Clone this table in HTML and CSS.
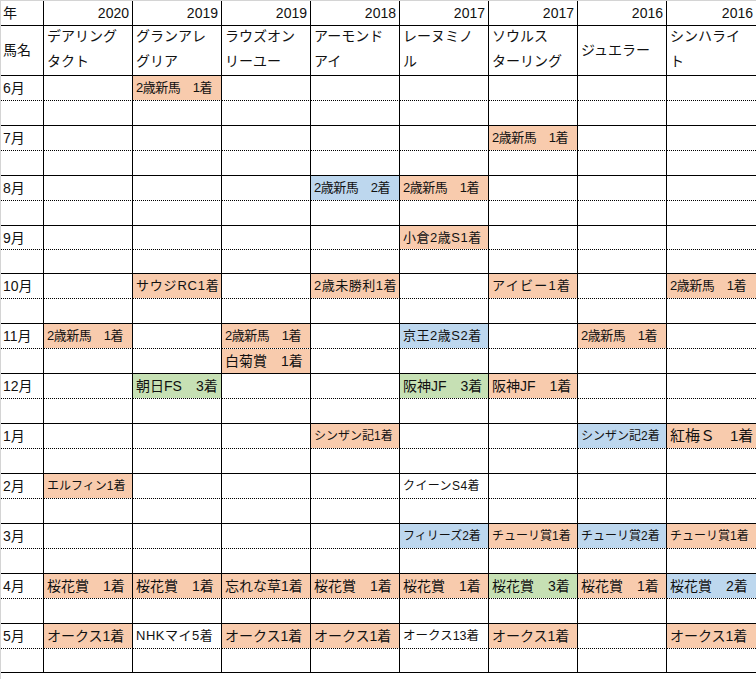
FILE: index.html
```html
<!DOCTYPE html>
<html lang="ja">
<head>
<meta charset="utf-8">
<title>桜花賞・オークス 戦績表</title>
<link rel="stylesheet" href="styles.css">
</head>
<body>
<div class="page">
  <div class="sheet">
    <div class="row">
      <div class="c">年</div><div class="c yr">2020</div><div class="c yr">2019</div><div class="c yr">2019</div><div class="c yr">2018</div><div class="c yr">2017</div><div class="c yr">2017</div><div class="c yr">2016</div><div class="c yr">2016</div>
    </div>
    <div class="row">
      <div class="c hd"><span>馬名</span></div>
      <div class="c hd two"><span>デアリング<br>タクト</span></div>
      <div class="c hd two"><span>グランアレ<br>グリア</span></div>
      <div class="c hd two"><span>ラウズオン<br>リーユー</span></div>
      <div class="c hd two"><span>アーモンド<br>アイ</span></div>
      <div class="c hd two"><span>レーヌミノ<br>ル</span></div>
      <div class="c hd two"><span>ソウルス<br>ターリング</span></div>
      <div class="c hd"><span>ジュエラー</span></div>
      <div class="c hd two"><span>シンハライ<br>ト</span></div>
    </div>

    <div class="row top">
      <div class="c">6月</div><div class="c"></div><div class="c or tight">2歳新馬　1着</div><div class="c"></div><div class="c"></div><div class="c"></div><div class="c"></div><div class="c"></div><div class="c"></div>
    </div>
    <div class="row"><div class="c"></div><div class="c"></div><div class="c"></div><div class="c"></div><div class="c"></div><div class="c"></div><div class="c"></div><div class="c"></div><div class="c"></div></div>

    <div class="row top">
      <div class="c">7月</div><div class="c"></div><div class="c"></div><div class="c"></div><div class="c"></div><div class="c"></div><div class="c or tight">2歳新馬　1着</div><div class="c"></div><div class="c"></div>
    </div>
    <div class="row"><div class="c"></div><div class="c"></div><div class="c"></div><div class="c"></div><div class="c"></div><div class="c"></div><div class="c"></div><div class="c"></div><div class="c"></div></div>

    <div class="row top">
      <div class="c">8月</div><div class="c"></div><div class="c"></div><div class="c"></div><div class="c bl tight">2歳新馬　2着</div><div class="c or tight">2歳新馬　1着</div><div class="c"></div><div class="c"></div><div class="c"></div>
    </div>
    <div class="row"><div class="c"></div><div class="c"></div><div class="c"></div><div class="c"></div><div class="c"></div><div class="c"></div><div class="c"></div><div class="c"></div><div class="c"></div></div>

    <div class="row top">
      <div class="c">9月</div><div class="c"></div><div class="c"></div><div class="c"></div><div class="c"></div><div class="c or sp1">小倉2歳S1着</div><div class="c"></div><div class="c"></div><div class="c"></div>
    </div>
    <div class="row"><div class="c"></div><div class="c"></div><div class="c"></div><div class="c"></div><div class="c"></div><div class="c"></div><div class="c"></div><div class="c"></div><div class="c"></div></div>

    <div class="row top">
      <div class="c">10月</div><div class="c"></div><div class="c or sp2">サウジRC1着</div><div class="c"></div><div class="c or sp1">2歳未勝利1着</div><div class="c"></div><div class="c or sp3">アイビー1着</div><div class="c"></div><div class="c or tight">2歳新馬　1着</div>
    </div>
    <div class="row"><div class="c"></div><div class="c"></div><div class="c"></div><div class="c"></div><div class="c"></div><div class="c"></div><div class="c"></div><div class="c"></div><div class="c"></div></div>

    <div class="row top">
      <div class="c">11月</div><div class="c or tight">2歳新馬　1着</div><div class="c"></div><div class="c or tight">2歳新馬　1着</div><div class="c"></div><div class="c bl sp1">京王2歳S2着</div><div class="c"></div><div class="c or tight">2歳新馬　1着</div><div class="c"></div>
    </div>
    <div class="row">
      <div class="c"></div><div class="c"></div><div class="c"></div><div class="c or k14">白菊賞　1着</div><div class="c"></div><div class="c"></div><div class="c"></div><div class="c"></div><div class="c"></div>
    </div>

    <div class="row top">
      <div class="c">12月</div><div class="c"></div><div class="c gr k14">朝日FS　3着</div><div class="c"></div><div class="c"></div><div class="c gr k14">阪神JF　3着</div><div class="c or k14">阪神JF　1着</div><div class="c"></div><div class="c"></div>
    </div>
    <div class="row"><div class="c"></div><div class="c"></div><div class="c"></div><div class="c"></div><div class="c"></div><div class="c"></div><div class="c"></div><div class="c"></div><div class="c"></div></div>

    <div class="row top">
      <div class="c">1月</div><div class="c"></div><div class="c"></div><div class="c"></div><div class="c or k12">シンザン記1着</div><div class="c"></div><div class="c"></div><div class="c bl k12">シンザン記2着</div><div class="c or k15">紅梅Ｓ　1着</div>
    </div>
    <div class="row"><div class="c"></div><div class="c"></div><div class="c"></div><div class="c"></div><div class="c"></div><div class="c"></div><div class="c"></div><div class="c"></div><div class="c"></div></div>

    <div class="row top">
      <div class="c">2月</div><div class="c or k12">エルフィン1着</div><div class="c"></div><div class="c"></div><div class="c"></div><div class="c k12 wide">クイーンS4着</div><div class="c"></div><div class="c"></div><div class="c"></div>
    </div>
    <div class="row"><div class="c"></div><div class="c"></div><div class="c"></div><div class="c"></div><div class="c"></div><div class="c"></div><div class="c"></div><div class="c"></div><div class="c"></div></div>

    <div class="row top">
      <div class="c">3月</div><div class="c"></div><div class="c"></div><div class="c"></div><div class="c"></div><div class="c bl k12">フィリーズ2着</div><div class="c or k12">チューリ賞1着</div><div class="c bl k12">チューリ賞2着</div><div class="c or k12">チューリ賞1着</div>
    </div>
    <div class="row"><div class="c"></div><div class="c"></div><div class="c"></div><div class="c"></div><div class="c"></div><div class="c"></div><div class="c"></div><div class="c"></div><div class="c"></div></div>

    <div class="row top">
      <div class="c">4月</div><div class="c or k14">桜花賞　1着</div><div class="c or k14">桜花賞　1着</div><div class="c or k14">忘れな草1着</div><div class="c or k14">桜花賞　1着</div><div class="c or k14">桜花賞　1着</div><div class="c gr k14">桜花賞　3着</div><div class="c or k14">桜花賞　1着</div><div class="c bl k14">桜花賞　2着</div>
    </div>
    <div class="row"><div class="c"></div><div class="c"></div><div class="c"></div><div class="c"></div><div class="c"></div><div class="c"></div><div class="c"></div><div class="c"></div><div class="c"></div></div>

    <div class="row top">
      <div class="c">5月</div><div class="c or k14">オークス1着</div><div class="c sp1">NHKマイ5着</div><div class="c or k14">オークス1着</div><div class="c or k14">オークス1着</div><div class="c k125">オークス13着</div><div class="c or k14">オークス1着</div><div class="c"></div><div class="c or k14">オークス1着</div>
    </div>
    <div class="row"><div class="c"></div><div class="c"></div><div class="c"></div><div class="c"></div><div class="c"></div><div class="c"></div><div class="c"></div><div class="c"></div><div class="c"></div></div>
  </div>
</div>
</body>
</html>
```

FILE: styles.css
```css
* {
  box-sizing: border-box;
}

html,
body {
  margin: 0;
  padding: 0;
  background: #ffffff;
}

body {
  font-family: "Liberation Sans", "Noto Sans CJK JP", sans-serif;
  color: #111111;
}

.page {
  min-height: 100vh;
  border-left: 1px solid #d4d4d4;
  border-top: 1px solid #d4d4d4;
}

.sheet {
  display: grid;
  grid-template-columns: 43px repeat(8, 89px);
  grid-template-rows:
    25px 50px
    repeat(6, 25px)
    repeat(2, 24px)
    repeat(15, 25px)
    24px;
}

.row {
  display: contents;
}

.c {
  border-right: 1px solid #000000;
  border-bottom: 1px solid #000000;
  background-clip: padding-box;
  padding: 0 2px 0 3px;
  font-size: 13px;
  line-height: 24px;
  white-space: nowrap;
  overflow: hidden;
}

.row > .c:first-child {
  font-size: 14px;
  padding-left: 2px;
}

.row > .c:last-child {
  border-right: 0;
}

.top > .c {
  border-bottom-style: dotted;
}

.yr {
  font-size: 14px;
  text-align: right;
  padding-right: 3px;
}

.hd {
  display: flex;
  align-items: center;
  font-size: 14px;
  line-height: 25px;
}

.hd.two {
  padding-bottom: 4px;
}

.or {
  background-color: #f8cbad;
}

.bl {
  background-color: #bdd7ee;
}

.gr {
  background-color: #c6e0b4;
}

.k12 {
  font-size: 12px;
}

.k125 {
  font-size: 12.5px;
}

.k14 {
  font-size: 14px;
}

.k15 {
  font-size: 15px;
}

.tight {
  letter-spacing: -0.5px;
}

.wide {
  letter-spacing: 0.4px;
}

.sp1 {
  letter-spacing: 0.5px;
}

.sp2 {
  letter-spacing: 0.8px;
}

.sp3 {
  letter-spacing: 1.3px;
}
```
